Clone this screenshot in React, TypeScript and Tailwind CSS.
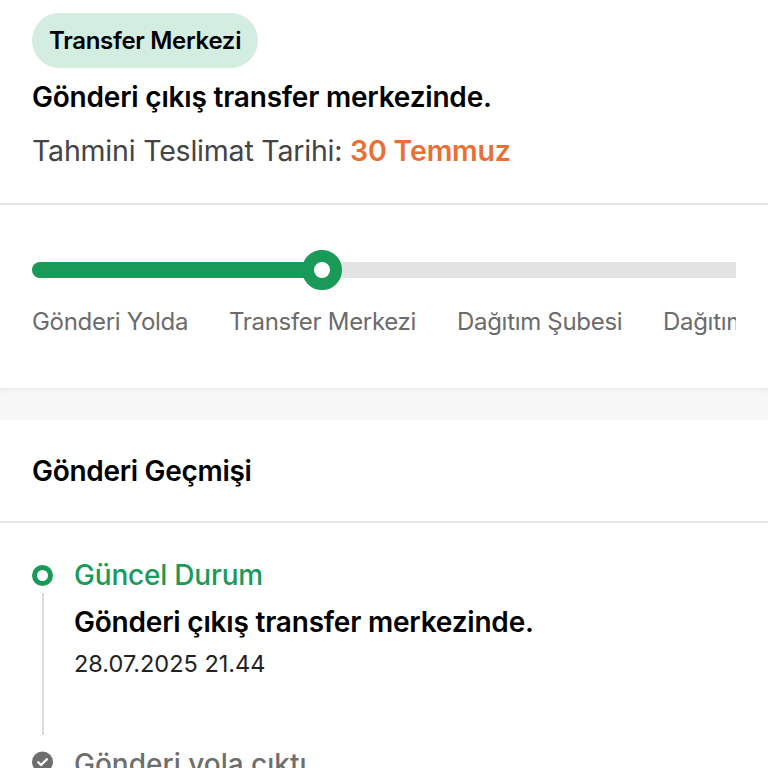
import React from 'react';

const labels = ['Gönderi Yolda', 'Transfer Merkezi', 'Dağıtım Şubesi', 'Dağıtım Aşamasında'];

export default function App() {
  return (
    <div className="w-[768px] h-[768px] overflow-hidden bg-white text-black font-['Inter','Noto_Sans',sans-serif]">
      {/* status header */}
      <div className="px-8 pt-[13px] pb-[35px] border-b-2 border-[#e6e6e6]">
        <span className="inline-flex items-center h-[55px] px-[17px] rounded-full bg-[#d4ede1] text-[24px] font-semibold tracking-[-0.3px]">
          Transfer Merkezi
        </span>
        <h1 className="mt-[12px] text-[28px] font-semibold leading-[34px] tracking-[-0.2px]">Gönderi çıkış transfer merkezinde.</h1>
        <p className="mt-[20px] text-[28.5px] leading-[34px] text-[#444] tracking-[-0.2px]">
          Tahmini Teslimat Tarihi: <span className="font-semibold text-[#ea6f35]">30 Temmuz</span>
        </p>
      </div>

      {/* progress */}
      <div className="px-8 pt-[57px] pb-[52px]">
        <div className="relative h-[16px] w-[704px] rounded-l-full bg-[#e3e3e3]">
          <div className="h-full w-[290px] rounded-l-full bg-[#1a9a58]" />
          <div className="absolute left-[270px] top-[-12px] w-[40px] h-[40px] rounded-full border-[12px] border-[#1a9a58] bg-white" />
        </div>
        <div className="mt-[30px] w-[704px] overflow-hidden whitespace-nowrap flex text-[24px] leading-[28px] text-[#6b6b6b] tracking-[-0.3px]">
          <span className="w-[197px] shrink-0">{labels[0]}</span>
          <span className="w-[228px] shrink-0">{labels[1]}</span>
          <span className="w-[206px] shrink-0">{labels[2]}</span>
          <span className="shrink-0">{labels[3]}</span>
        </div>
      </div>

      <div className="h-[32px] bg-[#f7f7f8] shadow-[inset_0_5px_6px_-4px_rgba(0,0,0,0.07)]" />

      {/* history */}
      <div className="px-8 h-[103px] flex items-center border-b-2 border-[#e6e6e6]">
        <h2 className="text-[28px] font-semibold tracking-[-0.3px]">Gönderi Geçmişi</h2>
      </div>

      <div className="pl-8 pt-[38px]">
        <div className="flex">
          <div className="w-[21px] flex flex-col items-center">
            <div className="mt-[4px] w-[21px] h-[21px] rounded-full border-[5px] border-[#1a9a58]" />
            <div className="mt-[7px] w-[2px] h-[142px] bg-[#dcdcdc]" />
          </div>
          <div className="ml-[21px]">
            <div className="text-[28px] font-medium leading-[28px] text-[#1a9a58] tracking-[-0.2px]">Güncel Durum</div>
            <div className="mt-[16px] text-[28px] font-semibold leading-[34px] tracking-[-0.2px]">Gönderi çıkış transfer merkezinde.</div>
            <div className="mt-[11px] text-[23.5px] leading-[28px] text-[#222]">28.07.2025 21.44</div>
          </div>
        </div>
        <div className="flex mt-[16px]">
          <div className="w-[21px] flex justify-center">
            <svg width="22" height="22" viewBox="0 0 22 22">
              <circle cx="11" cy="11" r="11" fill="#6e6e6e" />
              <path d="M6.5 11.2l3 3 6-6" fill="none" stroke="#fff" strokeWidth="2.4" strokeLinecap="round" strokeLinejoin="round" />
            </svg>
          </div>
          <div className="ml-[21px] text-[28px] font-medium leading-[26px] text-[#6e6e6e]">Gönderi yola çıktı</div>
        </div>
      </div>
    </div>
  );
}
